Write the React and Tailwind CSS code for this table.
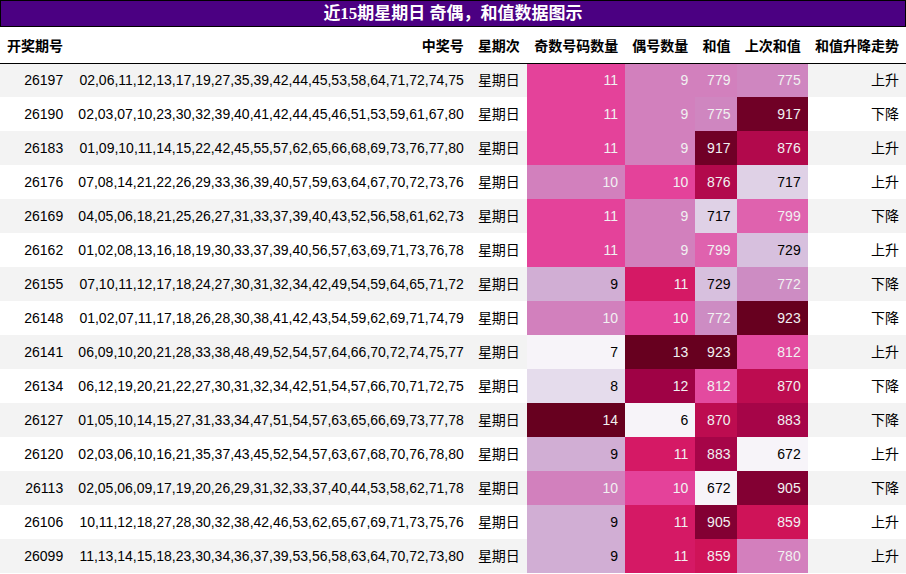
import React from "react";

const rows = [
  [26197, "02,06,11,12,13,17,19,27,35,39,42,44,45,53,58,64,71,72,74,75", 11, 9, 779, 775, "上升"],
  [26190, "02,03,07,10,23,30,32,39,40,41,42,44,45,46,51,53,59,61,67,80", 11, 9, 775, 917, "下降"],
  [26183, "01,09,10,11,14,15,22,42,45,55,57,62,65,66,68,69,73,76,77,80", 11, 9, 917, 876, "上升"],
  [26176, "07,08,14,21,22,26,29,33,36,39,40,57,59,63,64,67,70,72,73,76", 10, 10, 876, 717, "上升"],
  [26169, "04,05,06,18,21,25,26,27,31,33,37,39,40,43,52,56,58,61,62,73", 11, 9, 717, 799, "下降"],
  [26162, "01,02,08,13,16,18,19,30,33,37,39,40,56,57,63,69,71,73,76,78", 11, 9, 799, 729, "上升"],
  [26155, "07,10,11,12,17,18,24,27,30,31,32,34,42,49,54,59,64,65,71,72", 9, 11, 729, 772, "下降"],
  [26148, "01,02,07,11,17,18,26,28,30,38,41,42,43,54,59,62,69,71,74,79", 10, 10, 772, 923, "下降"],
  [26141, "06,09,10,20,21,28,33,38,48,49,52,54,57,64,66,70,72,74,75,77", 7, 13, 923, 812, "上升"],
  [26134, "06,12,19,20,21,22,27,30,31,32,34,42,51,54,57,66,70,71,72,75", 8, 12, 812, 870, "下降"],
  [26127, "01,05,10,14,15,27,31,33,34,47,51,54,57,63,65,66,69,73,77,78", 14, 6, 870, 883, "下降"],
  [26120, "02,03,06,10,16,21,35,37,43,45,52,54,57,63,67,68,70,76,78,80", 9, 11, 883, 672, "上升"],
  [26113, "02,05,06,09,17,19,20,26,29,31,32,33,37,40,44,53,58,62,71,78", 10, 10, 672, 905, "下降"],
  [26106, "10,11,12,18,27,28,30,32,38,42,46,53,62,65,67,69,71,73,75,76", 9, 11, 905, 859, "上升"],
  [26099, "11,13,14,15,18,23,30,34,36,37,39,53,56,58,63,64,70,72,73,80", 9, 11, 859, 780, "上升"],
];

const PuRd = [
  [247, 244, 249],
  [231, 225, 239],
  [212, 185, 218],
  [201, 148, 199],
  [223, 101, 176],
  [231, 41, 138],
  [206, 18, 86],
  [152, 0, 67],
  [103, 0, 31],
];

function cmap(x) {
  const idx = Math.min(255, Math.max(0, Math.floor(x * 256)));
  const t = idx / 255;
  const pos = t * (PuRd.length - 1);
  const i = Math.min(PuRd.length - 2, Math.floor(pos));
  const f = pos - i;
  const a = PuRd[i];
  const b = PuRd[i + 1];
  return a.map((v, k) => Math.round(v + (b[k] - v) * f));
}

function lum(rgb) {
  const c = rgb.map((v) => {
    const s = v / 255;
    return s <= 0.03928 ? s / 12.92 : Math.pow((s + 0.055) / 1.055, 2.4);
  });
  return 0.2126 * c[0] + 0.7152 * c[1] + 0.0722 * c[2];
}

function styleFor(v, min, max) {
  const rgb = cmap((v - min) / (max - min));
  const dark = lum(rgb) < 0.408;
  return {
    backgroundColor: `rgb(${rgb[0]},${rgb[1]},${rgb[2]})`,
    color: dark ? "#f1f1f1" : "#000000",
  };
}

const colRange = (i) => {
  const vals = rows.map((r) => r[i]);
  return [Math.min(...vals), Math.max(...vals)];
};

const ranges = { 2: colRange(2), 3: colRange(3), 4: colRange(4), 5: colRange(5) };

const headers = ["开奖期号", "中奖号", "星期次", "奇数号码数量", "偶号数量", "和值", "上次和值", "和值升降走势"];

export default function App() {
  return (
    <div className="w-[906px] h-[574px] overflow-hidden bg-white font-['Liberation_Sans','Noto_Sans_CJK_SC',sans-serif] text-black">
      <div className="h-[27px] border border-black bg-[#4b0082] flex items-center justify-center text-white font-bold text-[17px] leading-none font-['Liberation_Serif','Noto_Sans_CJK_SC',serif]">
        近15期星期日 奇偶，和值数据图示
      </div>
      <table className="w-full border-collapse text-[14px]">
        <thead>
          <tr className="h-[36px] border-b border-black">
            {headers.map((h, i) => (
              <th
                key={h}
                className={`px-[7px] pt-[1px] font-bold whitespace-nowrap ${i === 0 ? "text-left" : "text-right"} font-['Noto_Sans_CJK_SC',sans-serif]`}
              >
                {h}
              </th>
            ))}
          </tr>
        </thead>
        <tbody>
          {rows.map((r, ri) => (
            <tr key={r[0]} className={`h-[34px] ${ri % 2 === 0 ? "bg-[#f3f3f3]" : "bg-white"}`}>
              <td className="px-[7px] text-right whitespace-nowrap">{r[0]}</td>
              <td className="px-[7px] text-right whitespace-nowrap">{r[1]}</td>
              <td className="px-[7px] text-right whitespace-nowrap">星期日</td>
              {[2, 3, 4, 5].map((ci) => (
                <td
                  key={ci}
                  className="px-[7px] text-right whitespace-nowrap"
                  style={styleFor(r[ci], ranges[ci][0], ranges[ci][1])}
                >
                  {r[ci]}
                </td>
              ))}
              <td className="px-[7px] text-right whitespace-nowrap">{r[6]}</td>
            </tr>
          ))}
        </tbody>
      </table>
    </div>
  );
}
